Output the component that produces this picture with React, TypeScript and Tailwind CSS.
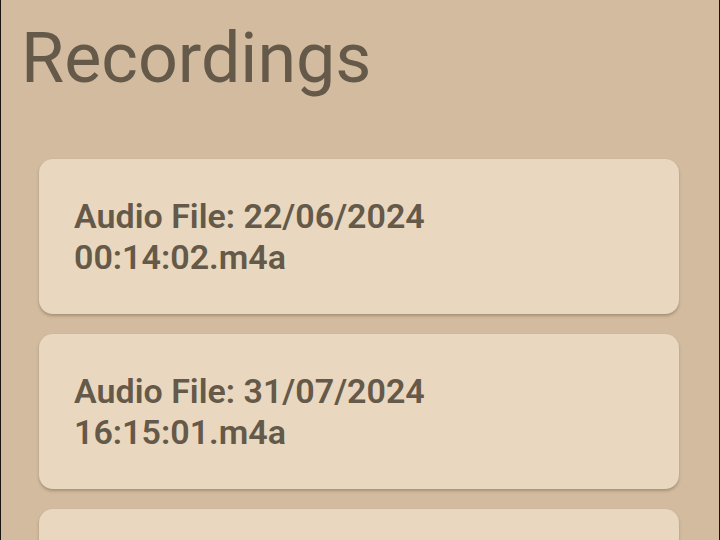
const recordings = [
  { name: 'Audio File: 22/06/2024', time: '00:14:02.m4a' },
  { name: 'Audio File: 31/07/2024', time: '16:15:01.m4a' },
];

function RecordingCard({ name, time }: { name?: string; time?: string }) {
  return (
    <div className="h-[155px] shrink-0 rounded-[14px] bg-[#e9d8bf] pl-[35px] flex flex-col justify-center shadow-[0_2px_3px_rgba(90,70,40,0.35)]">
      {name && <p className="text-[34px] leading-[41px] font-semibold text-[#655949]">{name}</p>}
      {time && <p className="text-[34px] leading-[41px] font-semibold text-[#655949]">{time}</p>}
    </div>
  );
}

export default function App() {
  return (
    <div
      className="w-[720px] h-[540px] overflow-hidden bg-[#d2bb9f] border-x border-[#1a1612]"
      style={{ fontFamily: 'Roboto, "Noto Sans", sans-serif' }}
    >
      <h1 className="pl-[20px] pt-[18px] text-[70px] leading-[80px] text-[#655949]">
        Recordings
      </h1>
      <div className="flex flex-col gap-[20px] pl-[38px] pr-[40px] pt-[61px]">
        {recordings.map(r => (
          <RecordingCard key={r.time} name={r.name} time={r.time} />
        ))}
        {/* next item, scrolled below the fold */}
        <RecordingCard />
      </div>
    </div>
  );
}
